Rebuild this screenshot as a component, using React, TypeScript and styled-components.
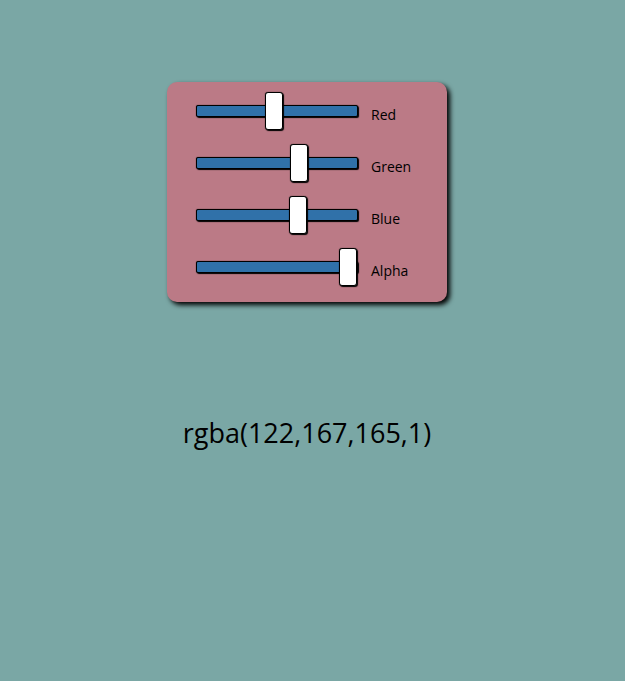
import React, { useState } from "react";
import styled, { createGlobalStyle, css } from "styled-components";

const GlobalStyle = createGlobalStyle`
  * { box-sizing: border-box; }
  body { margin: 0; }
`;

const Backdrop = styled.div`
  min-height: 100vh;
`;

const Page = styled.main`
  padding: 82px 11px 32px 0;
  display: flex;
  flex-direction: column;
  align-items: center;
  gap: 113px;
  color: #000;
  font-family: "Open Sans", "Noto Sans", sans-serif;
`;

const Panel = styled.form`
  width: 280px;
  max-width: 100%;
  padding: 3px 16px 9px 29px;
  display: flex;
  flex-direction: column;
  border-radius: 10px;
  background: #bb7a86;
  box-shadow: 3px 3px 5px #000;
`;

const Row = styled.div`
  height: 52px;
  display: flex;
  align-items: center;
  gap: 13px;
`;

const track = css`
  width: 100%;
  height: 12px;
  border: 1px solid #000;
  border-radius: 2px;
  background: #3071a9;
  box-shadow: 1px 1px 1px #000, 0 0 1px #0d0d0d;
  cursor: pointer;
`;

const thumb = css`
  width: 18px;
  height: 38px;
  border: 1px solid #000;
  border-radius: 3px;
  background: #fff;
  box-shadow: 1px 1px 1px #000, 0 0 1px #0d0d0d;
  cursor: pointer;
`;

const Slider = styled.input`
  appearance: none;
  width: 162px;
  height: 38px;
  margin: 0;
  background: transparent;

  &::-webkit-slider-runnable-track { ${track} }
  &::-webkit-slider-thumb {
    appearance: none;
    ${thumb}
    margin-top: -14px;
  }
  &::-moz-range-track { ${track} }
  &::-moz-range-thumb { ${thumb} }
`;

const Label = styled.label`
  padding-top: 8px;
  font-size: 14px;
  line-height: 20px;
`;

const Value = styled.output`
  font-size: 27px;
  line-height: 36px;
`;

const channels = [
  { id: "red", label: "Red", max: 255, step: 1 },
  { id: "green", label: "Green", max: 255, step: 1 },
  { id: "blue", label: "Blue", max: 255, step: 1 },
  { id: "alpha", label: "Alpha", max: 1, step: 0.01 },
];

export default function App() {
  const [values, setValues] = useState([122, 167, 165, 1]);
  const color = `rgba(${values.join(",")})`;

  const change = (index: number, value: number) =>
    setValues((current) => current.map((v, i) => (i === index ? value : v)));

  return (
    <Backdrop style={{ backgroundColor: color }}>
      <GlobalStyle />
      <Page>
        <Panel>
          {channels.map((channel, index) => (
            <Row key={channel.id}>
              <Slider
                id={channel.id}
                type="range"
                min={0}
                max={channel.max}
                step={channel.step}
                value={values[index]}
                onChange={(event) => change(index, Number(event.target.value))}
              />
              <Label htmlFor={channel.id}>{channel.label}</Label>
            </Row>
          ))}
        </Panel>
        <Value htmlFor="red green blue alpha">{color}</Value>
      </Page>
    </Backdrop>
  );
}
